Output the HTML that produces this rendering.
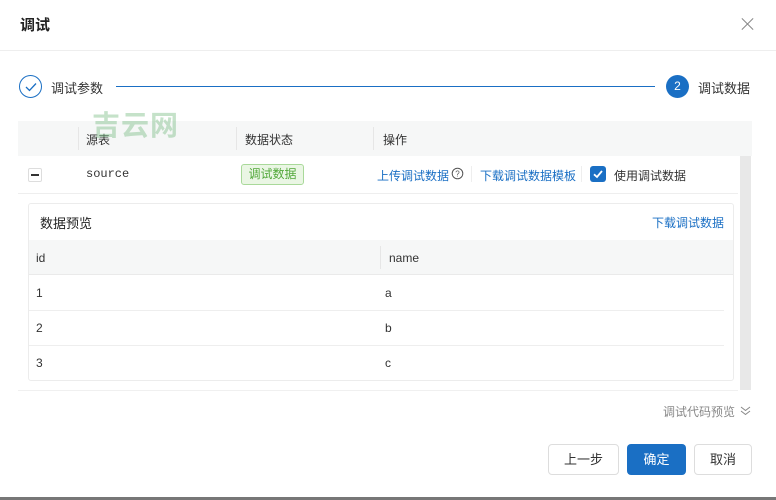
<!DOCTYPE html>
<html><head><meta charset="utf-8"><style>
*{box-sizing:border-box;margin:0;padding:0}
body{width:776px;height:500px;background:#fff;font-family:"Liberation Sans","Noto Sans CJK SC",sans-serif;color:#333;position:relative;overflow:hidden;font-size:12px}
.a{position:absolute}
.blue{color:#1a6fc4}
</style></head><body>
<div class="a" style="left:20px;top:14px;font-size:15px;font-weight:bold;color:#222">调试</div>
<div class="a" style="left:740px;top:16px;width:16px;height:16px">
<div class="a" style="left:7px;top:0px;width:1px;height:16px;background:#888;transform:rotate(45deg)"></div>
<div class="a" style="left:7px;top:0px;width:1px;height:16px;background:#888;transform:rotate(-45deg)"></div></div>
<div class="a" style="left:0;top:50px;width:776px;height:1px;background:#eee"></div>
<div class="a" style="left:19px;top:75px;width:23px;height:23px;border:1.5px solid #1a6fc4;border-radius:50%"></div>
<svg class="a" style="left:24px;top:80px" width="14" height="14"><path d="M2 7 L5.5 10.5 L12 3.5" stroke="#1a6fc4" stroke-width="1.3" fill="none"/></svg>
<div class="a" style="left:51px;top:78px;font-size:13px;color:#333">调试参数</div>
<div class="a" style="left:116px;top:86px;width:539px;height:1px;background:#1a6fc4"></div>
<div class="a" style="left:666px;top:75px;width:23px;height:23px;background:#1a6fc4;border-radius:50%;color:#fff;text-align:center;line-height:23px;font-size:12px">2</div>
<div class="a" style="left:698px;top:78px;font-size:13px;color:#333">调试数据</div>
<div class="a" style="left:18px;top:121px;width:734px;height:35px;background:#f6f7f7"></div>
<div class="a" style="left:92px;top:104px;font-size:28px;font-weight:bold;color:#7fbf8a;opacity:.45;letter-spacing:1px;z-index:5">吉云网</div>
<div class="a" style="left:78px;top:127px;width:1px;height:23px;background:#e6e6e6"></div>
<div class="a" style="left:236px;top:127px;width:1px;height:23px;background:#e6e6e6"></div>
<div class="a" style="left:373px;top:127px;width:1px;height:23px;background:#e6e6e6"></div>
<div class="a" style="left:86px;top:131px">源表</div>
<div class="a" style="left:245px;top:131px">数据状态</div>
<div class="a" style="left:383px;top:131px">操作</div>
<div class="a" style="left:18px;top:193px;width:720px;height:1px;background:#eee"></div>
<div class="a" style="left:28px;top:168px;width:14px;height:14px;border:1px solid #ddd;border-radius:2px"></div>
<div class="a" style="left:31px;top:174px;width:8px;height:1.5px;background:#333"></div>
<div class="a" style="left:86px;top:167px;font-family:'Liberation Mono',monospace;font-size:12px">source</div>
<div class="a" style="left:241px;top:164px;width:63px;height:21px;background:#eaf6e4;border:1px solid #a9d99a;border-radius:3px;color:#52a83a;text-align:center;line-height:19px">调试数据</div>
<div class="a blue" style="left:377px;top:167px">上传调试数据</div>
<svg class="a" style="left:451px;top:167px" width="13" height="13"><circle cx="6.5" cy="6.5" r="5.3" stroke="#555" fill="none"/><text x="6.5" y="9.5" font-size="8" text-anchor="middle" fill="#555" font-family="Liberation Sans">?</text></svg>
<div class="a" style="left:471px;top:166px;width:1px;height:16px;background:#eee"></div>
<div class="a blue" style="left:480px;top:167px">下载调试数据模板</div>
<div class="a" style="left:581px;top:166px;width:1px;height:16px;background:#eee"></div>
<div class="a" style="left:590px;top:166px;width:16px;height:16px;background:#1a6fc4;border-radius:3px"></div>
<svg class="a" style="left:590px;top:166px" width="16" height="16"><path d="M4 8.3 L7 11 L12 5" stroke="#fff" stroke-width="1.8" fill="none"/></svg>
<div class="a" style="left:614px;top:167px">使用调试数据</div>
<div class="a" style="left:740px;top:156px;width:11px;height:234px;background:#e8e8e8"></div>
<div class="a" style="left:28px;top:203px;width:706px;height:178px;border:1px solid #ececec;border-radius:3px"></div>
<div class="a" style="left:40px;top:213px;font-size:13px;color:#222">数据预览</div>
<div class="a blue" style="left:652px;top:214px">下载调试数据</div>
<div class="a" style="left:29px;top:240px;width:704px;height:35px;background:#f6f7f7;border-bottom:1px solid #eaeaea"></div>
<div class="a" style="left:380px;top:246px;width:1px;height:23px;background:#e6e6e6"></div>
<div class="a" style="left:36px;top:251px">id</div>
<div class="a" style="left:389px;top:251px">name</div>
<div class="a" style="left:29px;top:310px;width:695px;height:1px;background:#eee"></div>
<div class="a" style="left:29px;top:345px;width:695px;height:1px;background:#eee"></div>
<div class="a" style="left:36px;top:286px">1</div><div class="a" style="left:385px;top:286px">a</div>
<div class="a" style="left:36px;top:321px">2</div><div class="a" style="left:385px;top:321px">b</div>
<div class="a" style="left:36px;top:356px">3</div><div class="a" style="left:385px;top:356px">c</div>
<div class="a" style="left:18px;top:390px;width:720px;height:1px;background:#f0f0f0"></div>
<div class="a" style="left:663px;top:403px;color:#888">调试代码预览</div>
<svg class="a" style="left:740px;top:405px" width="11" height="11"><path d="M1 2 L5.5 5.5 L10 2 M1 6 L5.5 9.5 L10 6" stroke="#888" fill="none"/></svg>
<div class="a" style="left:548px;top:444px;width:71px;height:31px;border:1px solid #ddd;border-radius:4px;text-align:center;line-height:29px;font-size:13px">上一步</div>
<div class="a" style="left:627px;top:444px;width:59px;height:31px;background:#1a6fc4;border-radius:4px;text-align:center;line-height:31px;font-size:13px;color:#fff">确定</div>
<div class="a" style="left:694px;top:444px;width:58px;height:31px;border:1px solid #ddd;border-radius:4px;text-align:center;line-height:29px;font-size:13px">取消</div>
<div class="a" style="left:0;top:497px;width:776px;height:3px;background:#777"></div>
</body></html>
